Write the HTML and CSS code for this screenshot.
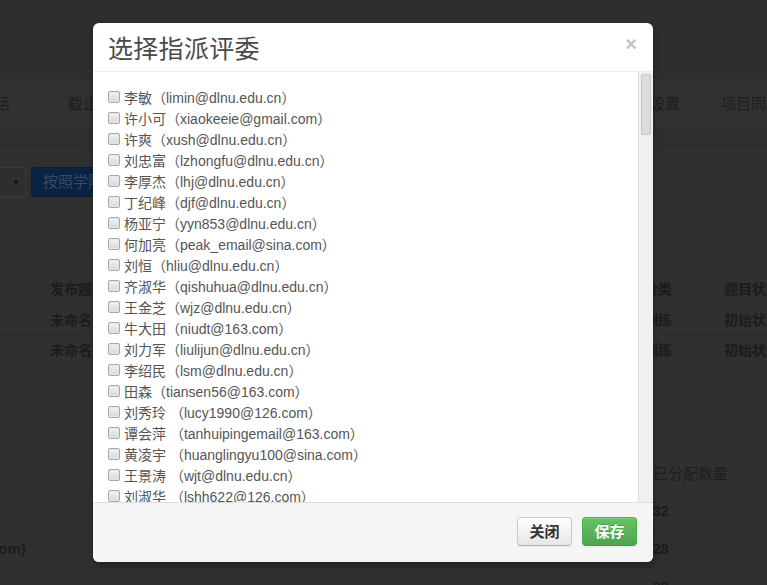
FILE: index.html
```html
<!DOCTYPE html>
<html lang="zh-CN">
<head>
<meta charset="utf-8">
<title>选择指派评委</title>
<link rel="stylesheet" href="styles.css">
</head>
<body>
<div class="page">
  <div class="topbar"></div>
  <nav class="nav">
    <span class="nav-item nav-a">生活</span>
    <span class="nav-item nav-b">截止日期</span>
    <span class="nav-item nav-c">参数设置</span>
    <span class="nav-item nav-d">项目同步</span>
  </nav>
  <div class="subbar"></div>
  <div class="toolbar">
    <div class="select"><span class="caret">▼</span></div>
    <div class="blue-btn">按照学院分配</div>
  </div>
  <div class="table t1">
    <div class="trow thead"><span class="c1">发布题目</span><span class="c2">分类</span><span class="c3">题目状态</span></div>
    <div class="trow"><span class="c1">未命名题目</span><span class="c2">训练</span><span class="c3">初始状态</span></div>
    <div class="trow last"><span class="c1">未命名题目</span><span class="c2">训练</span><span class="c3">初始状态</span></div>
  </div>
  <div class="table t2">
    <div class="trow thead"><span class="c0"></span><span class="c2">已分配数量</span></div>
    <div class="trow"><span class="c0"></span><span class="c2">32</span></div>
    <div class="trow"><span class="c0">com)</span><span class="c2">28</span></div>
    <div class="trow"><span class="c0"></span><span class="c2">32</span></div>
  </div>
</div>

<div class="modal">
  <div class="modal-header">
    <h3 class="modal-title">选择指派评委</h3>
    <span class="close">×</span>
  </div>
  <div class="modal-body">
    <div class="list">
      <label class="item"><span class="cb"></span>李敏（limin@dlnu.edu.cn）</label>
      <label class="item"><span class="cb"></span>许小可（xiaokeeie@gmail.com）</label>
      <label class="item"><span class="cb"></span>许爽（xush@dlnu.edu.cn）</label>
      <label class="item"><span class="cb"></span>刘忠富（lzhongfu@dlnu.edu.cn）</label>
      <label class="item"><span class="cb"></span>李厚杰（lhj@dlnu.edu.cn）</label>
      <label class="item"><span class="cb"></span>丁纪峰（djf@dlnu.edu.cn）</label>
      <label class="item"><span class="cb"></span>杨亚宁（yyn853@dlnu.edu.cn）</label>
      <label class="item"><span class="cb"></span>何加亮（peak_email@sina.com）</label>
      <label class="item"><span class="cb"></span>刘恒（hliu@dlnu.edu.cn）</label>
      <label class="item"><span class="cb"></span>齐淑华（qishuhua@dlnu.edu.cn）</label>
      <label class="item"><span class="cb"></span>王金芝（wjz@dlnu.edu.cn）</label>
      <label class="item"><span class="cb"></span>牛大田（niudt@163.com）</label>
      <label class="item"><span class="cb"></span>刘力军（liulijun@dlnu.edu.cn）</label>
      <label class="item"><span class="cb"></span>李绍民（lsm@dlnu.edu.cn）</label>
      <label class="item"><span class="cb"></span>田森（tiansen56@163.com）</label>
      <label class="item"><span class="cb"></span>刘秀玲 （lucy1990@126.com）</label>
      <label class="item"><span class="cb"></span>谭会萍 （tanhuipingemail@163.com）</label>
      <label class="item"><span class="cb"></span>黄凌宇 （huanglingyu100@sina.com）</label>
      <label class="item"><span class="cb"></span>王景涛 （wjt@dlnu.edu.cn）</label>
      <label class="item"><span class="cb"></span>刘淑华 （lshh622@126.com）</label>
      <label class="item"><span class="cb"></span>张伟 （zhangwei@dlnu.edu.cn）</label>
    </div>
    <div class="scrollbar"><div class="thumb"></div></div>
  </div>
  <div class="modal-footer">
    <button class="btn">关闭</button>
    <button class="btn btn-success">保存</button>
  </div>
</div>
</body>
</html>
```

FILE: styles.css
```css
* { box-sizing: border-box; }
html, body { margin: 0; padding: 0; }
body {
  width: 767px;
  height: 585px;
  overflow: hidden;
  background: #303030;
  font-family: "Liberation Sans", "Noto Sans CJK SC", sans-serif;
  font-size: 14px;
  position: relative;
}
.page { width: 767px; }
.topbar {
  height: 78px;
  background: #2e2e2e;
  border-bottom: 1px solid #2a2a2a;
}
.nav {
  height: 50px;
  background: #313131;
  border-bottom: 1px solid #363636;
  display: flex;
  align-items: center;
  color: #1e1e1e;
  font-size: 15px;
  white-space: nowrap;
}
.nav-item { flex: none; }
.nav-a { margin-left: -20px; }
.nav-b { margin-left: 58px; }
.nav-c { margin-left: 492px; }
.nav-d { margin-left: 41px; }
.subbar {
  height: 20px;
  background: #2f2f2f;
  border-bottom: 1px solid #2c2c2c;
}
.toolbar {
  margin-top: 19px;
  display: flex;
  gap: 5px;
  height: 30px;
}
.select {
  width: 26px;
  height: 30px;
  border: 1px solid #393939;
  border-left: none;
  background: #2e2e2e;
  border-radius: 0 3px 3px 0;
  display: flex;
  align-items: center;
  justify-content: flex-end;
  padding-right: 5px;
}
.caret { color: #111; font-size: 8px; }
.blue-btn {
  width: 120px;
  height: 30px;
  background: #0a2342;
  border: 1px solid #0b1d36;
  border-radius: 3px;
  color: #3a4a62;
  font-size: 15px;
  line-height: 28px;
  padding-left: 11px;
  white-space: nowrap;
}
.table { width: 767px; }
.t1 { margin-top: 57px; border-top: 1px solid #2b2b2b; }
.trow {
  display: flex;
  height: 30px;
  align-items: center;
  border-bottom: 1px solid #2b2b2b;
  color: #1c1c1c;
  font-weight: bold;
  font-size: 14px;
  white-space: nowrap;
  overflow: hidden;
}
.trow > span { flex: none; }
.t1 .thead { height: 49px; align-items: flex-end; padding-bottom: 5px; }
.t1 .last { border-bottom: none; }
.c1 { margin-left: 50px; width: 594px; }
.c2 { width: 80px; }
.c3 { width: 60px; }
.t2 { margin-top: 90px; }
.t2 .trow { height: 38px; }
.t2 .trow:first-child { font-weight: normal; color: #1e1e1e; font-size: 15px; }
.c0 { width: 663px; margin-left: -10px; font-size: 15px; }
.t2 .c2 { width: 100px; }

/* modal */
.modal {
  position: absolute;
  left: 93px;
  top: 23px;
  width: 560px;
  height: 539px;
  background: #fff;
  border-radius: 6px;
  box-shadow: 0 3px 7px rgba(0,0,0,0.35);
  display: flex;
  flex-direction: column;
  overflow: hidden;
}
.modal-header {
  height: 49px;
  border-bottom: 1px solid #eee;
  display: flex;
  align-items: center;
  justify-content: space-between;
  padding: 0 16px 0 15px;
}
.modal-title {
  margin: 0;
  font-family: "Noto Sans CJK SC", sans-serif;
  font-weight: normal;
  font-size: 25px;
  line-height: 30px;
  color: #4a4a4a;
  letter-spacing: 0.3px;
}
.close {
  color: #c4c4c4;
  font-size: 20px;
  font-weight: bold;
  line-height: 20px;
  margin-top: -6px;
}
.modal-body {
  height: 430px;
  display: flex;
  overflow: hidden;
}
.list {
  flex: 1;
  overflow: hidden;
  padding: 14px 0 0 15px;
}
.item {
  display: flex;
  align-items: center;
  height: 21px;
  color: #555;
  font-size: 14px;
  white-space: nowrap;
}
.cb {
  width: 12px;
  height: 12px;
  border: 1px solid #a8a8a8;
  border-radius: 2px;
  background: linear-gradient(#f2f2f2, #d8d8d8);
  box-shadow: inset 0 0 0 1px #e8e8e8;
  margin-right: 4px;
  flex: none;
}
.scrollbar {
  width: 15px;
  flex: none;
  background: #f0f0f0;
  border-left: 1px solid #ddd;
  padding: 2px 2px 0 2px;
}
.thumb {
  height: 61px;
  background: #dcdcdc;
  border: 1px solid #c6c6c6;
  border-radius: 2px;
}
.modal-footer {
  height: 60px;
  border-top: 1px solid #ddd;
  background: #f5f5f5;
  display: flex;
  justify-content: flex-end;
  align-items: flex-start;
  gap: 10px;
  padding: 14px 16px 0 0;
}
.btn {
  height: 29px;
  width: 55px;
  padding: 0;
  font-family: "Liberation Sans", "Noto Sans CJK SC", sans-serif;
  font-size: 15px;
  font-weight: bold;
  line-height: 27px;
  color: #333;
  border: 1px solid #ccc;
  border-bottom-color: #b3b3b3;
  border-radius: 4px;
  background: linear-gradient(#ffffff, #e6e6e6);
  box-shadow: inset 0 1px 0 rgba(255,255,255,0.2), 0 1px 2px rgba(0,0,0,0.05);
}
.btn-success {
  color: #fff;
  border-color: #4cae4c;
  border-bottom-color: #449d44;
  background: linear-gradient(#62c462, #51a351);
  text-shadow: 0 -1px 0 rgba(0,0,0,0.2);
}
```
